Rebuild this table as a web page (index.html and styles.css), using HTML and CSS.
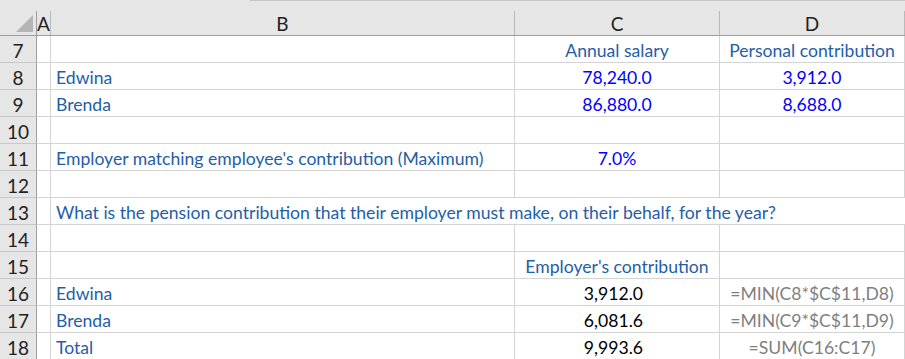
FILE: index.html
```html
<!DOCTYPE html>
<html lang="en">
<head>
    <meta charset="UTF-8">
    <meta name="viewport" content="width=device-width, initial-scale=1.0">
    <title>Pension contribution</title>
    <link rel="stylesheet" href="styles.css">
</head>
<body>
    <!-- strip left over from the formula bar above the grid -->
    <div class="bar-edge"></div>

    <div class="sheet">
        <!-- column headers -->
        <div class="corner"><div class="head-inner">
            <svg class="select-all" width="17" height="17" viewBox="0 0 17 17"><polygon points="17,0 17,17 0,17" fill="#b4b4b4"/></svg>
        </div></div>
        <div class="col-head"><div class="head-inner">A</div></div>
        <div class="col-head"><div class="head-inner">B</div></div>
        <div class="col-head"><div class="head-inner">C</div></div>
        <div class="col-head"><div class="head-inner">D</div></div>

        <!-- row 7 -->
        <div class="row-head">7</div>
        <div class="cell"></div>
        <div class="cell"></div>
        <div class="cell label center">Annual salary</div>
        <div class="cell label center">Personal contribution</div>

        <!-- row 8 -->
        <div class="row-head">8</div>
        <div class="cell"></div>
        <div class="cell label">Edwina</div>
        <div class="cell input center">78,240.0</div>
        <div class="cell input center">3,912.0</div>

        <!-- row 9 -->
        <div class="row-head">9</div>
        <div class="cell"></div>
        <div class="cell label">Brenda</div>
        <div class="cell input center">86,880.0</div>
        <div class="cell input center">8,688.0</div>

        <!-- row 10 -->
        <div class="row-head">10</div>
        <div class="cell"></div>
        <div class="cell"></div>
        <div class="cell"></div>
        <div class="cell"></div>

        <!-- row 11 -->
        <div class="row-head">11</div>
        <div class="cell"></div>
        <div class="cell label">Employer matching employee's contribution (Maximum)</div>
        <div class="cell input center">7.0%</div>
        <div class="cell"></div>

        <!-- row 12 -->
        <div class="row-head">12</div>
        <div class="cell"></div>
        <div class="cell"></div>
        <div class="cell"></div>
        <div class="cell"></div>

        <!-- row 13: question runs over C and D -->
        <div class="row-head">13</div>
        <div class="cell"></div>
        <div class="cell label spill">What is the pension contribution that their employer must make, on their behalf, for the year?</div>

        <!-- row 14 -->
        <div class="row-head">14</div>
        <div class="cell"></div>
        <div class="cell"></div>
        <div class="cell"></div>
        <div class="cell"></div>

        <!-- row 15 -->
        <div class="row-head">15</div>
        <div class="cell"></div>
        <div class="cell"></div>
        <div class="cell label center">Employer's contribution</div>
        <div class="cell"></div>

        <!-- row 16 -->
        <div class="row-head">16</div>
        <div class="cell"></div>
        <div class="cell label">Edwina</div>
        <div class="cell value">3,912.0</div>
        <div class="cell formula">=MIN(C8*$C$11,D8)</div>

        <!-- row 17 -->
        <div class="row-head">17</div>
        <div class="cell"></div>
        <div class="cell label">Brenda</div>
        <div class="cell value">6,081.6</div>
        <div class="cell formula">=MIN(C9*$C$11,D9)</div>

        <!-- row 18 -->
        <div class="row-head">18</div>
        <div class="cell"></div>
        <div class="cell label">Total</div>
        <div class="cell value">9,993.6</div>
        <div class="cell formula">=SUM(C16:C17)</div>
    </div>
</body>
</html>
```

FILE: styles.css
```css
/* page */
body {
    margin: 0;
    background: #e6e6e6;
    font-family: 'Lato', 'Liberation Sans', sans-serif;
    font-size: 17.6px;
    color: #000;
    overflow: hidden;
}

.bar-edge {
    height: 1px;
    margin-left: 250px;
    background: #c6c6c6;
}

/* grid of cells */
.sheet {
    display: grid;
    grid-template-columns: 37px 14px 464px 205px 1fr;
    grid-template-rows: 35px;
    grid-auto-rows: 27px;
}

/* column headers */
.corner,
.col-head {
    background: #e6e6e6;
    border-bottom: 1px solid #9e9e9e;
    padding-top: 10px;
    box-sizing: border-box;
}

.head-inner {
    height: 100%;
    border-right: 1px solid #b9b9b9;
    display: flex;
    align-items: center;
    justify-content: center;
    color: #222;
    font-size: 19px;
}

.corner .head-inner {
    justify-content: flex-end;
    align-items: flex-end;
    padding: 0 3px 3px 0;
    box-sizing: border-box;
    border-right-color: #9e9e9e;
}

/* row numbers */
.row-head {
    background: #e6e6e6;
    border-right: 1px solid #9e9e9e;
    border-bottom: 1px solid #c8c8c8;
    display: flex;
    align-items: center;
    justify-content: center;
    padding-top: 2px;
    box-sizing: border-box;
    color: #222;
    font-size: 19px;
}

/* cells */
.cell {
    background: #fff;
    border-right: 1px solid #d4d4d4;
    border-bottom: 1px solid #d4d4d4;
    display: flex;
    align-items: center;
    padding: 2px 5px 0;
    box-sizing: border-box;
    white-space: nowrap;
    overflow: hidden;
}

.center {
    justify-content: center;
}

.spill {
    grid-column: span 3;
    border-right: none;
}

.label {
    color: #1f5ea8;
}

.input {
    color: #0000ff;
}

.value {
    justify-content: flex-end;
    padding-right: 76px;
}

.formula {
    justify-content: center;
    color: #7f7f7f;
}
```
